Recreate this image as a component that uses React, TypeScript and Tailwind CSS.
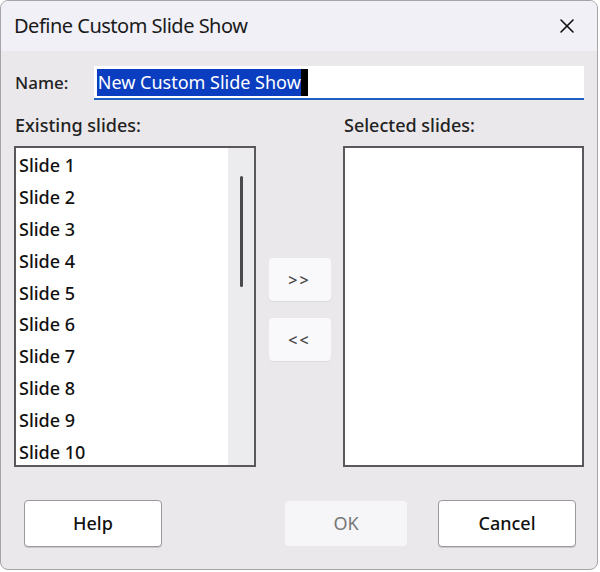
import { X } from "lucide-react"

const slides = Array.from({ length: 10 }, (_, i) => `Slide ${i + 1}`)

const font = { fontFamily: "'Noto Sans', 'Open Sans', sans-serif" }

function DialogButton({ label, disabled }: { label: string; disabled?: boolean }) {
  return (
    <button
      className={
        disabled
          ? "h-[45px] w-[122px] rounded-[4px] bg-[#f6f5f7] text-[18px] text-[#777]"
          : "h-[47px] w-[138px] rounded-[4px] border border-[#9a999c] bg-white text-[18px] font-medium text-[#111] shadow-[0_1px_0_#c9c7ca]"
      }
    >
      {label}
    </button>
  )
}

export default function App() {
  return (
    <div className="w-[600px] h-[572px] bg-white" style={font}>
      <div className="w-[598px] h-[570px] rounded-[8px] border border-[#a6a4a8] bg-[#ebe8eb] overflow-hidden flex flex-col">
        <div className="h-[50px] shrink-0 bg-[#f0f0f6] flex items-center justify-between pl-[13px] pr-[18px]">
          <span className="text-[20px] text-[#1a1a1a] tracking-[-0.5px]">Define Custom Slide Show</span>
          <X size={24} strokeWidth={1.6} className="text-[#111]" />
        </div>

        <div className="flex-1 px-[13px] pt-[15px]">
          <div className="flex items-center h-[34px]">
            <span className="w-[80px] text-[17px] font-medium text-[#222] pl-[1px]">Name:</span>
            <div className="w-[492px] h-[34px] bg-white border-b-2 border-[#1f5fbf] flex items-center pl-[3px]">
              <span className="bg-[#0a3dbf] text-white text-[18px] leading-[27px] pl-[1px] border-r-[7px] border-black">
                New Custom Slide Show
              </span>
            </div>
          </div>

          <div className="flex mt-[13px]">
            <div className="flex flex-col">
              <span className="text-[18px] font-medium text-[#222] leading-[24px] pl-[1px]">Existing slides:</span>
              <div className="mt-[9px] w-[242px] h-[321px] border-2 border-[#5a585c] bg-white flex">
                <ul className="flex-1 pl-[3px] pt-[2px]">
                  {slides.map((s) => (
                    <li key={s} className="h-[31.9px] leading-[31.9px] text-[18px] font-medium text-[#111]">
                      {s}
                    </li>
                  ))}
                </ul>
                <div className="w-[26px] bg-[#ecebee] flex justify-center pt-[28px]">
                  <div className="w-[3px] h-[111px] rounded-full bg-[#4a494c]" />
                </div>
              </div>
            </div>

            <div className="w-[88px] flex flex-col items-center pt-[145px] gap-[17px]">
              <button className="w-[62px] h-[43px] rounded-[4px] bg-[#f9f8fa] text-[16px] font-medium text-[#444] shadow-[0_1px_1px_#dcdadd] tracking-[2px]">
                &gt;&gt;
              </button>
              <button className="w-[62px] h-[43px] rounded-[4px] bg-[#f9f8fa] text-[16px] font-medium text-[#444] shadow-[0_1px_1px_#dcdadd] tracking-[2px]">
                &lt;&lt;
              </button>
            </div>

            <div className="flex flex-col">
              <span className="text-[18px] font-medium text-[#222] leading-[24px] pl-[1px]">Selected slides:</span>
              <div className="mt-[9px] w-[241px] h-[321px] border-2 border-[#5a585c] bg-white" />
            </div>
          </div>

          <div className="flex items-center mt-[33px] pl-[10px]">
            <DialogButton label="Help" />
            <div className="ml-[123px]">
              <DialogButton label="OK" disabled />
            </div>
            <div className="ml-[31px]">
              <DialogButton label="Cancel" />
            </div>
          </div>
        </div>
      </div>
    </div>
  )
}
